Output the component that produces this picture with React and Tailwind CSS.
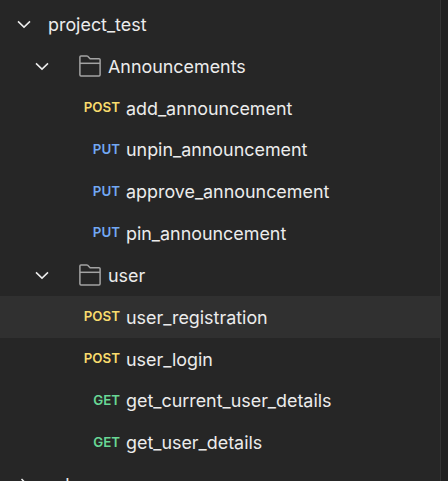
import React from "react";

const METHOD_COLORS = {
  POST: "text-[#f9dc6d]",
  PUT: "text-[#72a8f4]",
  GET: "text-[#68d795]",
};

const Chevron = ({ right }) => (
  <svg width="14" height="14" viewBox="0 0 14 14" fill="none" stroke="#ededed" strokeWidth="1.5" className="shrink-0">
    {right ? <path d="M4.5 1 L10.5 7 L4.5 13" /> : <path d="M1 4.4 L7 10.1 L13 4.4" />}
  </svg>
);

const Folder = () => (
  <svg width="22" height="22" viewBox="0 0 22 22" fill="none" stroke="#a3a3a3" strokeWidth="1.5" className="shrink-0">
    <path d="M2 .9 H7.7 Q8.3 .9 8.7 1.3 L11.1 3.7 H20 Q21.1 3.7 21.1 4.8 V19.8 Q21.1 20.9 20 20.9 H2 Q.9 20.9 .9 19.8 V2 Q.9 .9 2 .9 Z" />
    <path d="M.9 8.3 H21.1" />
  </svg>
);

const ROW = "flex h-[41.85px] shrink-0 items-center whitespace-nowrap";

const Project = ({ name, closed }) => (
  <div className={`${ROW} gap-[17px] pl-[17px]`}>
    <Chevron right={closed} />
    <span className="pt-px">{name}</span>
  </div>
);

const Group = ({ name }) => (
  <div className={`${ROW} pl-[35px]`}>
    <Chevron />
    <span className="ml-[30px] mr-[7px]">
      <Folder />
    </span>
    <span className="pt-px">{name}</span>
  </div>
);

const Request = ({ method, name, active }) => (
  <div className={`${ROW} ${active ? "bg-[#303030]" : ""}`}>
    <span className={`w-[120px] pb-px text-right text-[13.3px] font-semibold ${METHOD_COLORS[method]}`}>{method}</span>
    <span className="ml-[6px] pt-px">{name}</span>
  </div>
);

export default function App() {
  return (
    <div className="flex h-[481px] w-[448px] overflow-hidden bg-[#212121] font-['Inter',sans-serif] text-[17.9px] leading-none text-[#ececec]">
      <div className="flex w-[441px] flex-col border-r border-[#343434] bg-[#262626] pt-[3.4px]">
        <Project name="project_test" />
        <Group name="Announcements" />
        <Request method="POST" name="add_announcement" />
        <Request method="PUT" name="unpin_announcement" />
        <Request method="PUT" name="approve_announcement" />
        <Request method="PUT" name="pin_announcement" />
        <Group name="user" />
        <Request method="POST" name="user_registration" active />
        <Request method="POST" name="user_login" />
        <Request method="GET" name="get_current_user_details" />
        <Request method="GET" name="get_user_details" />
        <Project name="role" closed />
      </div>
    </div>
  );
}
